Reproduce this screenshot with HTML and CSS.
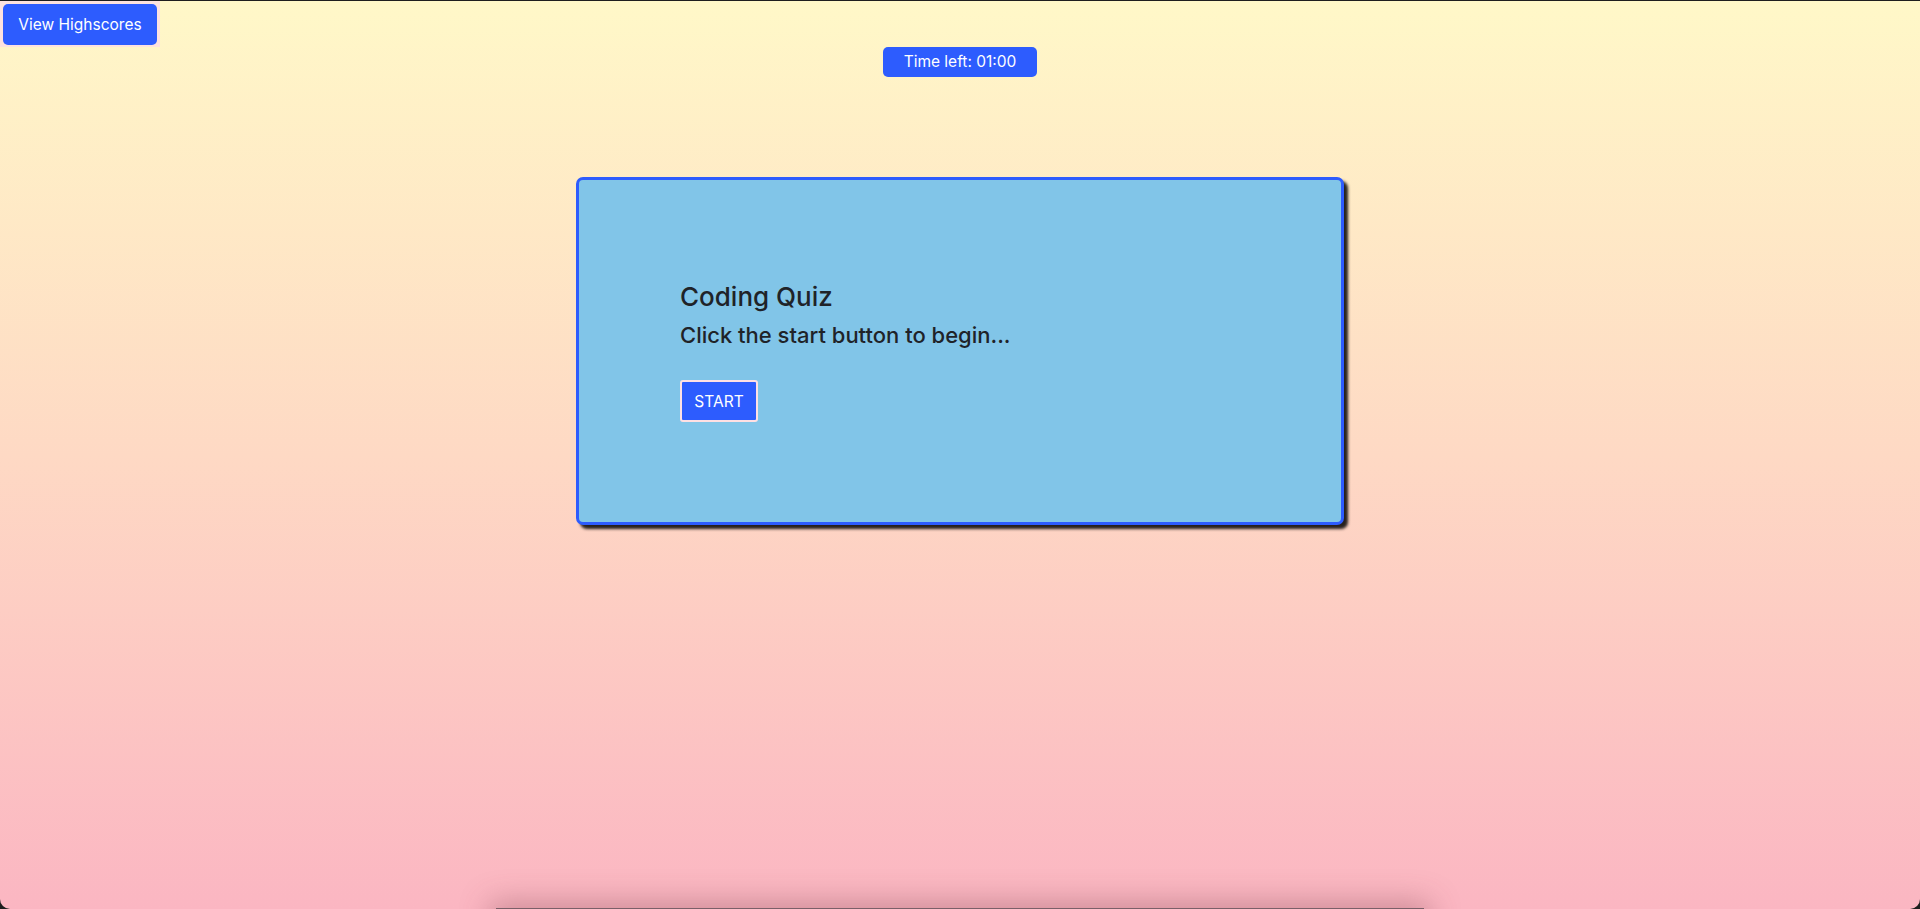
FILE: index.html
```html
<!DOCTYPE html>
<html lang="en">
<head>
<meta charset="utf-8">
<title>Coding Quiz</title>
<link rel="stylesheet" href="styles.css">
</head>
<body>
<div class="page">
  <header class="topbar">
    <div class="hs-wrap"><button class="btn hs-btn">View Highscores</button></div>
  </header>
  <div class="timer-row">
    <div class="timer">Time left: 01:00</div>
  </div>
  <main class="card">
    <h1 class="title">Coding Quiz</h1>
    <h2 class="subtitle">Click the start button to begin...</h2>
    <button class="btn start-btn">START</button>
  </main>
  <section class="scores"></section>
</div>
</body>
</html>
```

FILE: styles.css
```css
html {
  background: #1e1e1e;
}
body {
  margin: 0;
  padding-top: 1px;
  font-family: Inter, "Noto Sans", sans-serif;
}
.page {
  height: calc(100vh - 1px);
  overflow: hidden;
  background: linear-gradient(to bottom, #fff8c8 0%, #fed9c4 50%, #fbb6c2 100%);
  border-radius: 0 0 10px 10px;
  display: flex;
  flex-direction: column;
  align-items: center;
}
.topbar {
  align-self: stretch;
  display: flex;
}
.hs-wrap {
  background: #fde2df;
  padding: 3px 3px 2px 3px;
}
.btn {
  font-family: Inter, "Noto Sans", sans-serif;
  color: #fff;
  background: #2d5cfe;
  border: none;
  cursor: pointer;
}
.hs-btn {
  display: block;
  width: 154px;
  height: 41px;
  padding: 0;
  font-size: 15.5px;
  border-radius: 5px;
}
.timer-row {
  display: flex;
  justify-content: center;
}
.timer {
  width: 154px;
  height: 30px;
  line-height: 30px;
  text-align: center;
  background: #2d5cfe;
  color: #fff;
  font-size: 15.5px;
  border-radius: 5px;
}
.card {
  box-sizing: border-box;
  width: 768px;
  height: 348px;
  margin-top: 100px;
  padding: 101px 100px 0 101px;
  background: #81c5e8;
  border: 3px solid #2d5cfe;
  border-radius: 7px;
  box-shadow: 4px 4px 3px rgba(0, 0, 0, 0.85);
  display: flex;
  flex-direction: column;
  align-items: flex-start;
  flex-shrink: 0;
}
.title {
  margin: 0;
  font-size: 26px;
  line-height: 32px;
  font-weight: 500;
  color: #1f2328;
}
.subtitle {
  margin: 7px 0 0;
  font-size: 22px;
  line-height: 30px;
  font-weight: 500;
  color: #1f2328;
}
.start-btn {
  margin-top: 30px;
  width: 78px;
  height: 42px;
  padding: 0;
  font-size: 15.5px;
  font-weight: 400;
  border: 2px solid #ffe0e3;
  border-radius: 3px;
}
.scores {
  flex-shrink: 0;
  width: 928px;
  height: 60px;
  margin-top: 383px;
  background: #7a5f68;
  box-shadow: 0 0 30px 6px rgba(120, 60, 70, 0.35);
}
```
